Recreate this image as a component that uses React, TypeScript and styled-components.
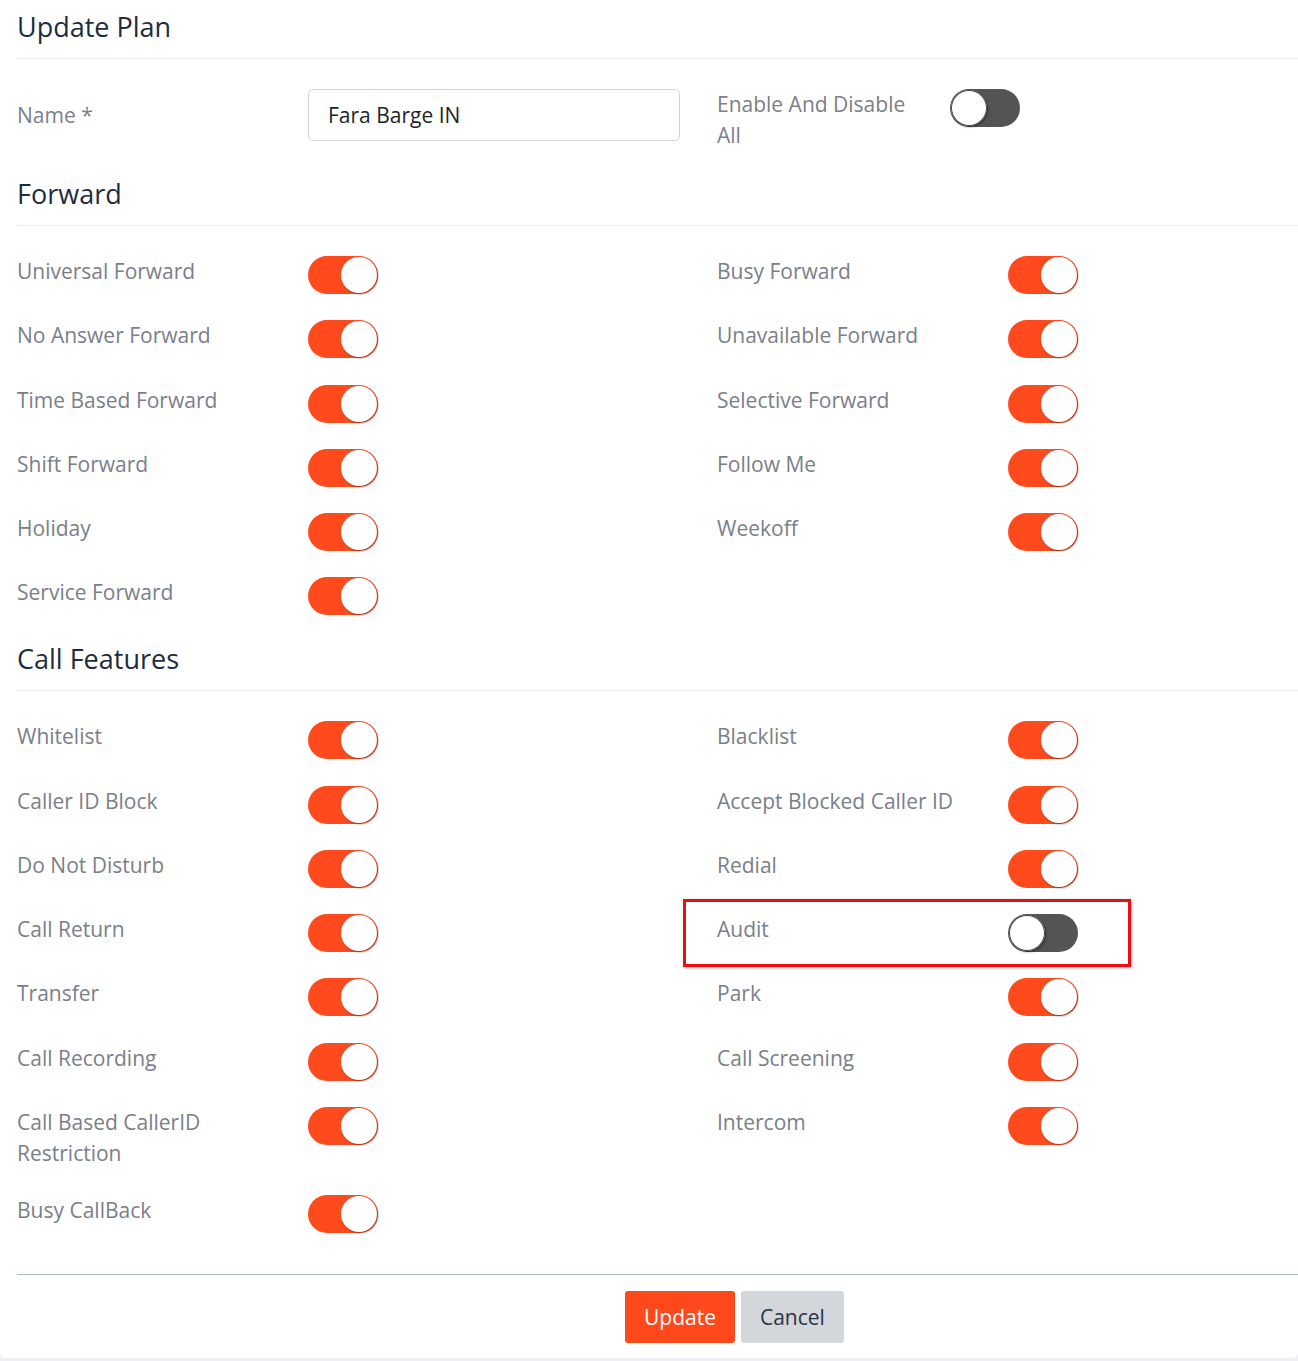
import React from "react"
import styled, { createGlobalStyle } from "styled-components"

const GlobalStyle = createGlobalStyle`
  html, body {
    margin: 0;
    padding: 0;
    background: #eef0f5;
    font-family: "Open Sans", "Noto Sans", sans-serif;
  }
`

const Card = styled.div`
  background: #fff;
  padding: 10px 0 15px 17px;
  border-radius: 0 0 6px 6px;
`

const SectionTitle = styled.h3`
  margin: 0;
  font-size: 27px;
  line-height: 33px;
  font-weight: 400;
  color: #1e2c3f;
  padding-bottom: 15px;
  border-bottom: 1px solid #e9ecef;
`

const HeaderRow = styled.div`
  display: grid;
  grid-template-columns: 700px 1fr;
  align-items: start;
  padding: 30px 0 26px;
`

const FieldGrid = styled.div`
  display: grid;
  grid-template-columns: 700px 1fr;
  row-gap: 26.25px;
  align-items: start;
  padding: 30px 0 27px;
`

const Field = styled.div<{ $center?: boolean; $marked?: boolean }>`
  position: relative;
  display: flex;
  align-items: ${(p) => (p.$center ? "center" : "flex-start")};

  ${(p) =>
    p.$marked &&
    `
    &::after {
      content: "";
      position: absolute;
      left: -34px;
      top: -15px;
      width: 448px;
      height: 68px;
      box-sizing: border-box;
      border: 3px solid #ec0d10;
      box-shadow: 1px 1px 3px rgba(0, 0, 0, 0.25);
      pointer-events: none;
    }
  `}
`

const Label = styled.div<{ $width?: number; $gap?: number }>`
  width: ${(p) => p.$width ?? 276}px;
  margin-right: ${(p) => p.$gap ?? 15}px;
  font-size: 21px;
  line-height: 31px;
  color: #7a8089;
`

const TextInput = styled.input`
  width: 372px;
  height: 52px;
  box-sizing: border-box;
  border: 1px solid #cfd2d6;
  border-radius: 5px;
  padding: 0 19px;
  font-family: inherit;
  font-size: 21px;
  color: #212529;
  outline: none;
`

const Track = styled.span<{ $on: boolean }>`
  position: relative;
  display: inline-block;
  flex: none;
  width: 70px;
  height: 38px;
  border-radius: 19px;
  background: ${(p) => (p.$on ? "#ff4a1e" : "#545454")};
`

const Knob = styled.span<{ $on: boolean }>`
  position: absolute;
  top: 1px;
  left: ${(p) => (p.$on ? "33px" : "1px")};
  width: 36px;
  height: 36px;
  border-radius: 50%;
  background: #fff;
  box-shadow: ${(p) =>
    p.$on ? "1px 1px 2px rgba(120, 30, 0, 0.7)" : "inset 0 0 0 1px #444, 1px 1px 2px rgba(0,0,0,0.5)"};
`

const Footer = styled.div`
  margin-top: 14px;
  border-top: 1px solid #aebfc0;
  padding: 16px 0 0 608px;
  display: flex;
  gap: 6px;
`

const Button = styled.button<{ $primary?: boolean }>`
  height: 52px;
  padding: 0 19px;
  border: none;
  border-radius: 3px;
  font-family: inherit;
  font-size: 21px;
  background: ${(p) => (p.$primary ? "#ff491c" : "#d3d6db")};
  color: ${(p) => (p.$primary ? "#fff" : "#2a3441")};
`

const Toggle = ({ on }: { on: boolean }) => (
  <Track $on={on}>
    <Knob $on={on} />
  </Track>
)

type Item = { label: string; on?: boolean; marked?: boolean } | null

const forward: Item[] = [
  { label: "Universal Forward" },
  { label: "Busy Forward" },
  { label: "No Answer Forward" },
  { label: "Unavailable Forward" },
  { label: "Time Based Forward" },
  { label: "Selective Forward" },
  { label: "Shift Forward" },
  { label: "Follow Me" },
  { label: "Holiday" },
  { label: "Weekoff" },
  { label: "Service Forward" },
  null,
]

const features: Item[] = [
  { label: "Whitelist" },
  { label: "Blacklist" },
  { label: "Caller ID Block" },
  { label: "Accept Blocked Caller ID" },
  { label: "Do Not Disturb" },
  { label: "Redial" },
  { label: "Call Return" },
  { label: "Audit", on: false, marked: true },
  { label: "Transfer" },
  { label: "Park" },
  { label: "Call Recording" },
  { label: "Call Screening" },
  { label: "Call Based CallerID Restriction" },
  { label: "Intercom" },
  { label: "Busy CallBack" },
  null,
]

const Fields = ({ items }: { items: Item[] }) => (
  <FieldGrid>
    {items.map((item, i) =>
      item ? (
        <Field key={i} $marked={item.marked}>
          <Label>{item.label}</Label>
          <Toggle on={item.on !== false} />
        </Field>
      ) : (
        <div key={i} />
      )
    )}
  </FieldGrid>
)

const App = () => {
  return (
    <>
      <GlobalStyle />
      <Card>
        <SectionTitle>Update Plan</SectionTitle>
        <HeaderRow>
          <Field $center>
            <Label>Name *</Label>
            <TextInput defaultValue="Fara Barge IN" />
          </Field>
          <Field>
            <Label $width={200} $gap={33}>
              Enable And Disable All
            </Label>
            <Toggle on={false} />
          </Field>
        </HeaderRow>

        <SectionTitle>Forward</SectionTitle>
        <Fields items={forward} />

        <SectionTitle>Call Features</SectionTitle>
        <Fields items={features} />

        <Footer>
          <Button $primary>Update</Button>
          <Button>Cancel</Button>
        </Footer>
      </Card>
    </>
  )
}

export default App
